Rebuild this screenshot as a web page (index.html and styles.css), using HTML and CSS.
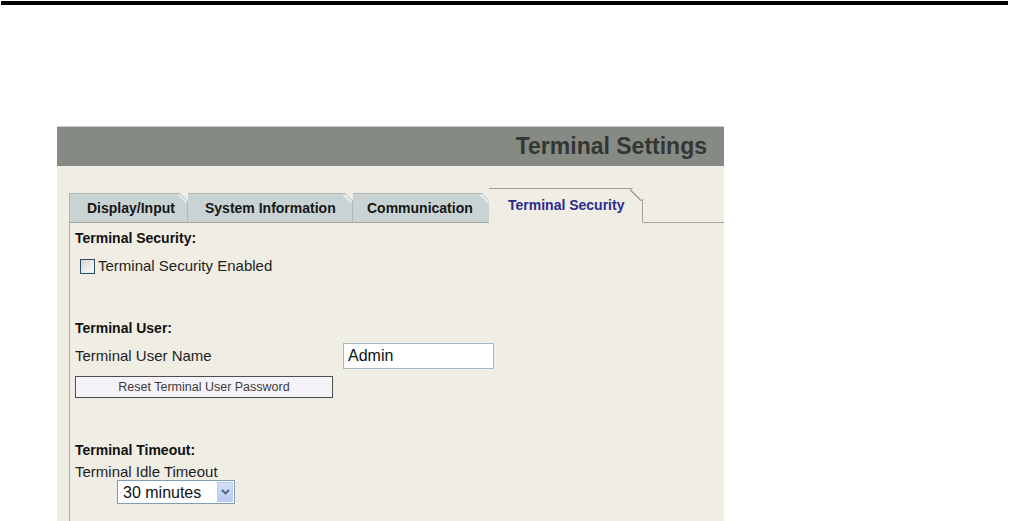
FILE: index.html
```html
<!DOCTYPE html>
<html>
<head>
<meta charset="utf-8">
<title>Terminal Settings</title>
<link rel="stylesheet" href="styles.css">
</head>
<body>
<div class="topbar"></div>
<div class="panel">
  <div class="header"><h1 class="title">Terminal Settings</h1></div>
  <div class="tabs">
    <div class="tab tab-display">Display/Input</div>
    <div class="tab tab-system">System Information</div>
    <div class="tab tab-comm">Communication</div>
    <div class="tab tab-active">Terminal Security</div>
  </div>
  <div class="content">
    <div class="heading h-security">Terminal Security:</div>
    <label class="check-row">
      <span class="checkbox"></span>
      <span class="text">Terminal Security Enabled</span>
    </label>
    <div class="heading h-user">Terminal User:</div>
    <div class="field-row">
      <span class="field-label text">Terminal User Name</span>
      <input class="text-input" type="text" value="Admin">
    </div>
    <button class="reset-btn" type="button">Reset Terminal User Password</button>
    <div class="heading h-timeout">Terminal Timeout:</div>
    <div class="text idle-label">Terminal Idle Timeout</div>
    <div class="select">
      <span class="select-value">30 minutes</span>
      <span class="select-arrow">
        <svg width="9" height="6" viewBox="0 0 9 6"><path d="M1 1 L4.5 4.5 L8 1" fill="none" stroke="#4d6185" stroke-width="1.8"/></svg>
      </span>
    </div>
  </div>
</div>
</body>
</html>
```
FILE: styles.css
```css
html, body {
  margin: 0;
  padding: 0;
  background: #ffffff;
  overflow: hidden;
}
body {
  width: 1009px;
  height: 521px;
  font-family: "Liberation Sans", Arial, sans-serif;
  color: #1a1a1a;
}
.topbar {
  margin: 1px 1px 0 1px;
  height: 4px;
  background: #000;
}
.panel {
  margin: 121px 0 0 57px;
  width: 667px;
  height: 395px;
  background: #efede4;
  overflow: hidden;
}
.header {
  height: 39px;
  border-top: 1px solid #c6c9c4;
  background: #858a83;
  display: flex;
  justify-content: flex-end;
  padding-right: 17px;
}
.title {
  margin: 0;
  font-size: 23px;
  line-height: 39px;
  font-weight: bold;
  color: #343634;
}
.tabs {
  display: flex;
  align-items: flex-end;
  margin-top: 22px;
  margin-left: 12px;
  height: 34px;
  border-bottom: 1px solid #a3a5a2;
}
.tab {
  position: relative;
  box-sizing: border-box;
  height: 30px;
  margin-bottom: -1px;
  padding-left: 17px;
  display: flex;
  align-items: center;
  font-size: 14px;
  font-weight: bold;
  color: #161616;
  background: #c9d3d3;
  border: 1px solid #b0b8b8;
  border-bottom: 1px solid #a3a5a2;
  clip-path: polygon(0 0, calc(100% - 8px) 0, 100% 8px, 100% 100%, 0 100%);
}
.tab::after {
  content: "";
  position: absolute;
  top: 0;
  right: 0;
  width: 9px;
  height: 9px;
  background: linear-gradient(to top right, transparent calc(50% - 1px), #e4e8e6 calc(50% - 1px), #e4e8e6 calc(50% + 1px), transparent calc(50% + 1px));
}
.tab + .tab {
  border-left: none;
}
.tab-display { width: 119px; }
.tab-system { width: 165px; }
.tab-comm { width: 137px; padding-left: 14px; }
.tab-active {
  width: 154px;
  height: 35px;
  padding-left: 19px;
  padding-bottom: 1px;
  margin-left: -1px;
  background: #efede4;
  color: #2d2b8e;
  border: 1px solid #a0a29f;
  border-bottom: 1px solid #efede4;
  clip-path: polygon(0 0, calc(100% - 11px) 0, 100% 11px, 100% 100%, 0 100%);
}
.tab-active::after {
  width: 12px;
  height: 12px;
  background: linear-gradient(to top right, transparent calc(50% - 1px), #a0a29f calc(50% - 1px), #a0a29f calc(50% + 0.5px), transparent calc(50% + 0.5px));
}
.content {
  margin-left: 12px;
  border-left: 1px solid #a7a8a4;
  padding-left: 5px;
  height: 300px;
  display: flex;
  flex-direction: column;
  align-items: flex-start;
}
.heading {
  font-size: 14px;
  line-height: 16px;
  font-weight: bold;
  color: #111;
}
.text {
  font-size: 15px;
  line-height: 18px;
  color: #1e1e1e;
}
.h-security { margin-top: 7px; }
.check-row {
  margin-top: 11px;
  display: flex;
  align-items: center;
  height: 18px;
}
.checkbox {
  box-sizing: border-box;
  width: 15px;
  height: 15px;
  margin-left: 5px;
  margin-right: 3px;
  border: 1px solid #2a4a6e;
  background: linear-gradient(135deg, #d6d4ce 0%, #ecebe6 55%, #fbfbf9 100%);
}
.h-user { margin-top: 45px; }
.field-row {
  margin-top: 7px;
  display: flex;
  align-items: flex-start;
}
.field-label {
  width: 268px;
  padding-top: 4px;
}
.text-input {
  box-sizing: border-box;
  width: 151px;
  height: 26px;
  margin: 0;
  padding: 0 0 0 4px;
  border: 1px solid #a5b8c6;
  background: #fff;
  font-family: "Liberation Sans", Arial, sans-serif;
  font-size: 16px;
  color: #111;
  outline: none;
}
.reset-btn {
  box-sizing: border-box;
  margin-top: 7px;
  width: 258px;
  height: 22px;
  padding: 0;
  border: 1px solid #4e4e4e;
  background: #f5f3f7;
  font-family: "Liberation Sans", Arial, sans-serif;
  font-size: 12.5px;
  color: #3c3c3c;
  text-align: center;
}
.h-timeout { margin-top: 44px; }
.idle-label {
  margin-top: 6px;
  line-height: 16px;
}
.select {
  box-sizing: border-box;
  margin-top: 0;
  margin-left: 42px;
  width: 118px;
  height: 24px;
  border: 1px solid #7f9db9;
  background: #fff;
  display: flex;
  align-items: center;
  justify-content: space-between;
  padding: 1px 1px 1px 5px;
}
.select-value {
  font-size: 16px;
  color: #111;
  padding-top: 2px;
}
.select-arrow {
  box-sizing: border-box;
  width: 16px;
  height: 20px;
  border: 1px solid #bccdf1;
  background: linear-gradient(#d3e0f8, #b6c9f1);
  display: flex;
  align-items: center;
  justify-content: center;
}
```
